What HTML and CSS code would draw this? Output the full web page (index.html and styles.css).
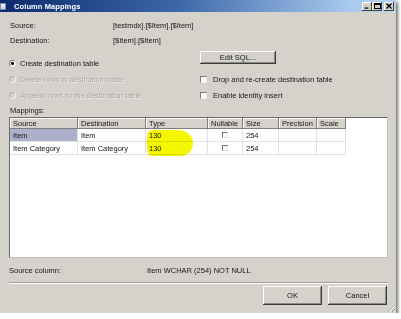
FILE: index.html
```html
<!DOCTYPE html>
<html>
<head>
<meta charset="utf-8">
<title>Column Mappings</title>
<link rel="stylesheet" href="styles.css">
</head>
<body>
<div class="window">
  <div class="titlebar">
    <span class="appicon"></span>
    <span class="title">Column Mappings</span>
    <div class="winbtns">
      <span class="wb"><svg width="6" height="6" viewBox="0 0 6 6"><rect x="0.5" y="4.5" width="4" height="1.2" fill="#000"/></svg></span>
      <span class="wb"><svg width="7" height="6" viewBox="0 0 7 6"><rect x="0.5" y="0.5" width="6" height="5" fill="none" stroke="#000" stroke-width="1"/><rect x="0.5" y="0.5" width="6" height="1.5" fill="#000"/></svg></span>
      <span class="wb wb-close"><svg width="6" height="6" viewBox="0 0 6 6"><path d="M0.5 0.5 L5.5 5.5 M5.5 0.5 L0.5 5.5" stroke="#000" stroke-width="1.4"/></svg></span>
    </div>
  </div>

  <div class="info">
    <span>Source:</span><span>[testmdx].[$Item].[$Item]</span>
    <span>Destination:</span><span>[$Item].[$Item]</span>
  </div>

  <div class="options">
    <div class="col-left">
      <div class="opt"><span class="radio checked"></span>Create destination table</div>
      <div class="opt disabled"><span class="radio"></span>Delete rows in destination table</div>
      <div class="opt disabled"><span class="radio"></span>Append rows to the destination table</div>
    </div>
    <div class="col-right">
      <button class="btn btn-sql">Edit SQL...</button>
      <div class="opt"><span class="check"></span>Drop and re-create destination table</div>
      <div class="opt"><span class="check"></span>Enable identity insert</div>
    </div>
  </div>

  <div class="maplabel">Mappings:</div>

  <div class="gridframe">
    <div class="lv">
      <div class="hd">Source</div>
      <div class="hd">Destination</div>
      <div class="hd">Type</div>
      <div class="hd">Nullable</div>
      <div class="hd">Size</div>
      <div class="hd">Precision</div>
      <div class="hd">Scale</div>

      <div class="c sel">Item</div>
      <div class="c">Item</div>
      <div class="c">130</div>
      <div class="c center"><span class="cb"></span></div>
      <div class="c">254</div>
      <div class="c"></div>
      <div class="c"></div>

      <div class="c">Item Category</div>
      <div class="c">Item Category</div>
      <div class="c">130</div>
      <div class="c center"><span class="cb"></span></div>
      <div class="c">254</div>
      <div class="c"></div>
      <div class="c"></div>
    </div>
    <div class="hl"></div>
  </div>

  <div class="srccol">
    <span>Source column:</span><span>Item WCHAR (254) NOT NULL</span>
  </div>

  <div class="sep"></div>

  <div class="actions">
    <button class="btn btn-dlg">OK</button>
    <button class="btn btn-dlg">Cancel</button>
  </div>

  <div class="grip"></div>
</div>
</body>
</html>
```

FILE: styles.css
```css
html, body {
  margin: 0;
  padding: 0;
  background: #ffffff;
}

body {
  font-family: "Liberation Sans", Arial, sans-serif;
  font-size: 7.5px;
  color: #161616;
}

.window {
  position: relative;
  width: 396px;
  height: 313px;
  background: #d5d2cb;
  box-shadow: 2px 2px 3px rgba(0, 0, 0, 0.55);
  display: flex;
  flex-direction: column;
  overflow: hidden;
}

/* title bar */
.titlebar {
  height: 12px;
  flex: none;
  display: flex;
  align-items: center;
  background: linear-gradient(to right, #0c2a6e 0%, #3d68a8 45%, #a8c9ee 88%, #b4d2f2 100%);
}

.appicon {
  width: 6px;
  height: 7px;
  margin-left: 0;
  background: linear-gradient(#f4f4f4, #c8d8e8);
  border: 1px solid #7c8ca8;
  box-sizing: border-box;
}

.title {
  margin-left: 8px;
  color: #ffffff;
  font-weight: bold;
  font-size: 7.5px;
  letter-spacing: 0.1px;
}

.winbtns {
  margin-left: auto;
  margin-right: 2px;
  display: flex;
}

.wb {
  width: 10px;
  height: 9px;
  box-sizing: border-box;
  background: #d4d0c8;
  box-shadow: inset -1px -1px #404040, inset 1px 1px #ffffff;
  display: flex;
  align-items: center;
  justify-content: center;
}

.wb-close {
  margin-left: 2px;
}

/* info rows */
.info {
  display: grid;
  grid-template-columns: 103px auto;
  grid-auto-rows: 15px;
  align-items: center;
  margin: 6px 0 0 10px;
}

/* options */
.options {
  display: flex;
  margin: 3px 0 0 9px;
}

.col-left {
  width: 191px;
  padding-top: 4px;
}

.col-right {
  display: flex;
  flex-direction: column;
  align-items: flex-start;
}

.opt {
  height: 16px;
  display: flex;
  align-items: center;
  white-space: nowrap;
}

.opt.disabled {
  color: #a9a7a1;
  text-shadow: 0.6px 0.6px 0 #efede9;
}

.radio {
  width: 7px;
  height: 7px;
  box-sizing: border-box;
  border-radius: 50%;
  border: 1px solid;
  border-color: #7a7a7a #e8e8e8 #e8e8e8 #7a7a7a;
  background: #ffffff;
  margin-right: 4px;
}

.radio.checked {
  background: radial-gradient(circle, #000 1.2px, #ffffff 1.7px);
}

.disabled .radio {
  background: #d5d2cb;
  border-color: #b2b0aa #f2f1ee #f2f1ee #b2b0aa;
}

.check {
  width: 7px;
  height: 7px;
  box-sizing: border-box;
  border: 1px solid;
  border-color: #7a7a7a #ececec #ececec #7a7a7a;
  background: #ffffff;
  margin-right: 6px;
}

.btn {
  font-family: inherit;
  font-size: 7.5px;
  color: #161616;
  background: #d5d2cb;
  border: none;
  padding: 0;
  box-shadow: inset -1px -1px #3c3c3c, inset 1px 1px #ffffff, inset -2px -2px #8a8a8a;
}

.btn-sql {
  width: 76px;
  height: 13px;
  margin-bottom: 7px;
}

/* mappings */
.maplabel {
  height: 14px;
  display: flex;
  align-items: center;
  margin-left: 10px;
}

.gridframe {
  position: relative;
  margin-left: 9px;
  width: 379px;
  height: 141px;
  flex: none;
  box-sizing: border-box;
  border: 1px solid;
  border-color: #6a6a6a #c4c2bd #c4c2bd #6a6a6a;
  background: #ffffff;
}

.lv {
  display: grid;
  grid-template-columns: 68px 68px 62px 35px 36px 38px 29px;
  grid-template-rows: 11px 13px 13px;
}

.hd {
  background: #d5d2cb;
  box-shadow: inset -1px -1px #7e7e7e, inset 1px 1px #ffffff;
  padding-left: 3px;
  display: flex;
  align-items: center;
  white-space: nowrap;
}

.c {
  box-sizing: border-box;
  border-right: 1px solid #e2e2e2;
  border-bottom: 1px solid #e2e2e2;
  padding-left: 3px;
  display: flex;
  align-items: center;
  white-space: nowrap;
}

.c.sel {
  background: #adb0cb;
}

.c.center {
  justify-content: center;
  padding-left: 0;
}

.cb {
  width: 6px;
  height: 6px;
  box-sizing: border-box;
  border: 1px solid;
  border-color: #6e6e6e #e0e0e0 #e0e0e0 #6e6e6e;
  background: #ffffff;
}

.hl {
  position: absolute;
  left: 137px;
  top: 12px;
  width: 46px;
  height: 26px;
  background: #f6f600;
  border-radius: 5px 15px 12px 4px / 8px 13px 13px 8px;
  mix-blend-mode: multiply;
}

/* source column */
.srccol {
  display: grid;
  grid-template-columns: 138px auto;
  height: 14px;
  align-items: center;
  margin: 5px 0 0 9px;
}

.sep {
  margin: 5px 8px 0 9px;
  height: 0;
  border-top: 1px solid #a09e99;
  border-bottom: 1px solid #ffffff;
}

.actions {
  display: flex;
  justify-content: flex-end;
  gap: 6px;
  margin-top: 2px;
  padding-right: 9px;
}

.btn-dlg {
  width: 59px;
  height: 19px;
}

.grip {
  position: absolute;
  right: 1px;
  bottom: 1px;
  width: 7px;
  height: 7px;
  background: repeating-linear-gradient(135deg, transparent 0 1.2px, #8a8884 1.2px 2.2px, #ffffff 2.2px 3px);
  clip-path: polygon(100% 0, 100% 100%, 0 100%);
}
```
